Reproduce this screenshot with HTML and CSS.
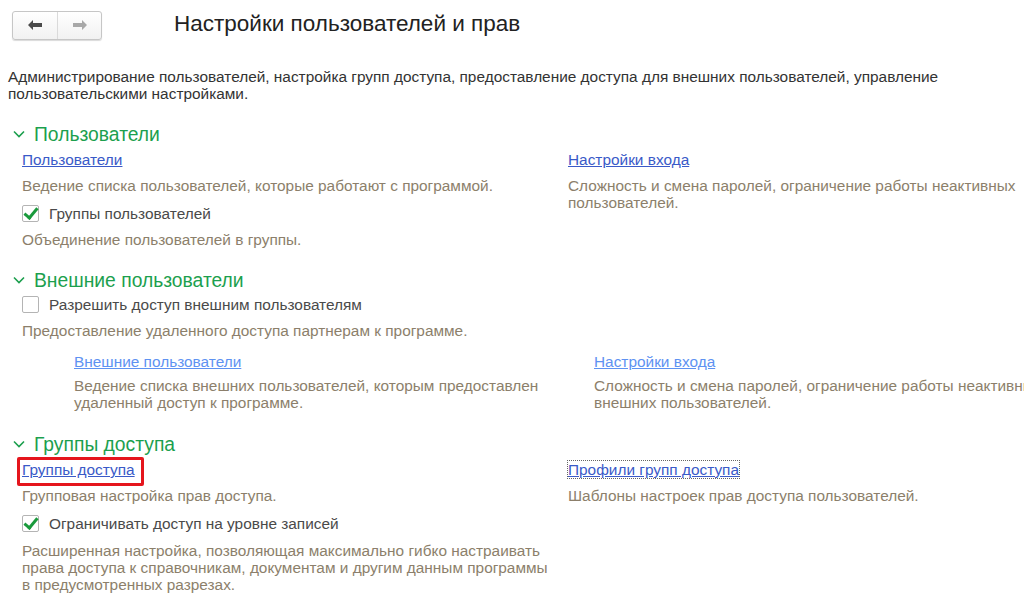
FILE: index.html
```html
<!DOCTYPE html>
<html>
<head>
  <title>Настройки пользователей и прав</title>
  <link rel="stylesheet" href="styles.css">
</head>
<body>
  <div class="header">
    <div class="nav">
      <button class="nav-btn" type="button">
        <svg width="16" height="12" viewBox="0 0 16 12"><path d="M1 6 L6 1 L6 4 L15 4 L15 8 L6 8 L6 11 Z" fill="#4a4a4a"/></svg>
      </button>
      <button class="nav-btn" type="button">
        <svg width="16" height="12" viewBox="0 0 16 12"><path d="M15 6 L10 1 L10 4 L1 4 L1 8 L10 8 L10 11 Z" fill="#a8a8a8"/></svg>
      </button>
    </div>
    <h1>Настройки пользователей и прав</h1>
  </div>

  <p class="intro">Администрирование пользователей, настройка групп доступа, предоставление доступа для внешних пользователей, управление пользовательскими настройками.</p>

  <div class="section">
    <div class="section-title">
      <svg class="chevron" width="12" height="8" viewBox="0 0 12 8"><path d="M1 1.5 L6 6.5 L11 1.5" fill="none" stroke="#1c9f4e" stroke-width="1.6"/></svg>
      Пользователи
    </div>
    <div class="columns">
      <div class="col">
        <a class="link" href="#">Пользователи</a>
        <div class="note">Ведение списка пользователей, которые работают с программой.</div>
        <label class="check"><span class="box checked"></span>Группы пользователей</label>
        <div class="note after-check">Объединение пользователей в группы.</div>
      </div>
      <div class="col">
        <a class="link" href="#">Настройки входа</a>
        <div class="note">Сложность и смена паролей, ограничение работы неактивных пользователей.</div>
      </div>
    </div>
  </div>

  <div class="section">
    <div class="section-title">
      <svg class="chevron" width="12" height="8" viewBox="0 0 12 8"><path d="M1 1.5 L6 6.5 L11 1.5" fill="none" stroke="#1c9f4e" stroke-width="1.6"/></svg>
      Внешние пользователи
    </div>
    <div class="col">
      <label class="check first"><span class="box"></span>Разрешить доступ внешним пользователям</label>
      <div class="note after-check">Предоставление удаленного доступа партнерам к программе.</div>
    </div>
    <div class="columns inner">
      <div class="col">
        <a class="link disabled" href="#">Внешние пользователи</a>
        <div class="note tight">Ведение списка внешних пользователей, которым предоставлен удаленный доступ к программе.</div>
      </div>
      <div class="col">
        <a class="link disabled" href="#">Настройки входа</a>
        <div class="note tight">Сложность и смена паролей, ограничение работы неактивных внешних пользователей.</div>
      </div>
    </div>
  </div>

  <div class="section last">
    <div class="section-title">
      <svg class="chevron" width="12" height="8" viewBox="0 0 12 8"><path d="M1 1.5 L6 6.5 L11 1.5" fill="none" stroke="#1c9f4e" stroke-width="1.6"/></svg>
      Группы доступа
    </div>
    <div class="columns">
      <div class="col">
        <a class="link marked" href="#">Группы доступа</a>
        <div class="note">Групповая настройка прав доступа.</div>
        <label class="check"><span class="box checked"></span>Ограничивать доступ на уровне записей</label>
        <div class="note after-check wide">Расширенная настройка, позволяющая максимально гибко настраивать права доступа к справочникам, документам и другим данным программы в предусмотренных разрезах.</div>
      </div>
      <div class="col">
        <a class="link focused" href="#">Профили групп доступа</a>
        <div class="note">Шаблоны настроек прав доступа пользователей.</div>
      </div>
    </div>
  </div>
</body>
</html>
```

FILE: styles.css
```css
body {
  font-family: "Liberation Sans", Arial, sans-serif;
  font-size: 15.4px;
  line-height: 17px;
  color: #4a4a4a;
  background-color: #ffffff;
  margin: 0;
  padding: 0;
  width: 1024px;
  height: 600px;
  overflow: hidden;
}

.header {
  display: flex;
  align-items: center;
  padding: 10px 0 0 12px;
  height: 30px;
}

.nav {
  display: flex;
  border: 1px solid #c6c6c6;
  border-radius: 3px;
  box-shadow: 0 1px 1px rgba(0, 0, 0, 0.15);
  background: linear-gradient(#ffffff, #f1f1f1);
}

.nav-btn {
  width: 44px;
  height: 27px;
  display: flex;
  align-items: center;
  justify-content: center;
  border: none;
  background: transparent;
  padding: 0;
}

.nav-btn + .nav-btn {
  border-left: 1px solid #dadada;
}

h1 {
  margin: -3px 0 0 72px;
  font-size: 22.5px;
  font-weight: normal;
  color: #222222;
}

.intro {
  margin: 28px 0 0 8px;
  color: #333333;
  width: 1000px;
}

.section {
  margin-top: 21px;
}

.section.last {
  margin-top: 22px;
}

.section-title {
  display: flex;
  align-items: center;
  height: 22px;
  font-size: 19.3px;
  color: #1c9f4e;
  padding-left: 13px;
}

.chevron {
  margin-right: 9px;
}

.columns {
  display: grid;
  grid-template-columns: 526px 480px;
  column-gap: 20px;
  padding-left: 22px;
}

.columns.inner {
  padding-left: 74px;
  grid-template-columns: 500px 480px;
  margin-top: 8px;
}

.section > .col {
  padding-left: 22px;
}

.col {
  display: flex;
  flex-direction: column;
  align-items: flex-start;
}

.link {
  margin-top: 6px;
  color: #3a5ac8;
  text-decoration: underline;
  position: relative;
}

.link.disabled {
  color: #5e92f2;
}

.link.focused {
  outline: 1px dotted #666666;
}

.link.marked::after {
  content: "";
  position: absolute;
  left: -5px;
  right: -9px;
  top: -4px;
  bottom: -8px;
  border: 3px solid #e5151d;
  border-radius: 2px;
}

.note {
  margin-top: 9px;
  color: #8c7f6b;
}

.note.tight {
  margin-top: 7px;
}

.note.after-check {
  margin-top: 8px;
}

.note.wide {
  margin-top: 9px;
}

.check {
  display: flex;
  align-items: center;
  height: 20px;
  margin-top: 9px;
  color: #4a4a4a;
}

.check.first {
  margin-top: 3px;
}

.box {
  width: 15px;
  height: 15px;
  border: 1px solid #b4b4b4;
  border-radius: 2px;
  background: #ffffff;
  margin-right: 10px;
  position: relative;
}

.box.checked::after {
  content: "";
  position: absolute;
  left: 4px;
  top: -1px;
  width: 5px;
  height: 11px;
  border-right: 3px solid #1a9a3c;
  border-bottom: 3px solid #1a9a3c;
  transform: rotate(40deg);
}
```
